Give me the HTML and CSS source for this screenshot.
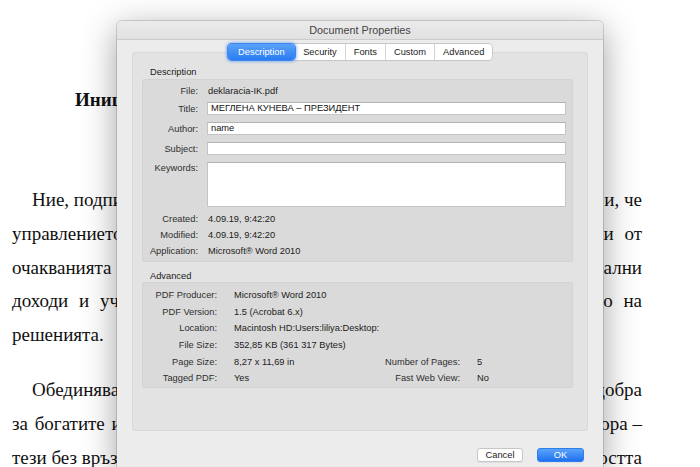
FILE: index.html
```html
<!DOCTYPE html>
<html lang="bg">
<head>
<meta charset="utf-8">
<title>Document Properties</title>
<link rel="stylesheet" href="styles.css">
</head>
<body>
<div class="doc">
  <div class="doc-title">Инициативен</div>
  <div class="para">
    <div class="ln first"><span>Ние, подписаните</span><span>и, че</span></div>
    <div class="ln"><span>управлението</span><span class="wide">и от</span></div>
    <div class="ln"><span>очакванията</span><span>реални</span></div>
    <div class="ln"><span class="wide">доходи и уч</span><span class="wide">само на</span></div>
    <div class="ln"><span>решенията.</span></div>
  </div>
  <div class="para">
    <div class="ln first"><span>Обединяваме</span><span>добра</span></div>
    <div class="ln"><span class="mid">за богатите и</span><span>хора –</span></div>
    <div class="ln"><span>тези без връзки</span><span>бедността</span></div>
  </div>
</div>

<div class="dialog">
  <div class="titlebar">Document Properties</div>
  <div class="dlg-body">
    <div class="tabs-wrap">
      <div class="tabs">
        <span class="tab sel">Description</span>
        <span class="tab">Security</span>
        <span class="tab">Fonts</span>
        <span class="tab">Custom</span>
        <span class="tab">Advanced</span>
      </div>
    </div>
    <div class="panel">
      <div class="sec-title">Description</div>
      <div class="box desc">
        <div class="row r-file"><span class="lbl">File:</span><span class="val">deklaracia-IK.pdf</span></div>
        <div class="row r-field r-first"><span class="lbl">Title:</span><span class="field">МЕГЛЕНА КУНЕВА – ПРЕЗИДЕНТ</span></div>
        <div class="row r-field"><span class="lbl">Author:</span><span class="field">name</span></div>
        <div class="row r-field"><span class="lbl">Subject:</span><span class="field"></span></div>
        <div class="row r-kw"><span class="lbl">Keywords:</span><span class="field area"></span></div>
        <div class="row r-info r-info-first"><span class="lbl">Created:</span><span class="val">4.09.19, 9:42:20</span></div>
        <div class="row r-info"><span class="lbl">Modified:</span><span class="val">4.09.19, 9:42:20</span></div>
        <div class="row r-info"><span class="lbl">Application:</span><span class="val">Microsoft® Word 2010</span></div>
      </div>
      <div class="sec-title sec-adv">Advanced</div>
      <div class="box adv">
        <span class="lbl">PDF Producer:</span><span class="val">Microsoft® Word 2010</span><span></span><span></span>
        <span class="lbl">PDF Version:</span><span class="val">1.5 (Acrobat 6.x)</span><span></span><span></span>
        <span class="lbl">Location:</span><span class="val">Macintosh HD:Users:liliya:Desktop:</span><span></span><span></span>
        <span class="lbl">File Size:</span><span class="val">352,85 KB (361 317 Bytes)</span><span></span><span></span>
        <span class="lbl">Page Size:</span><span class="val">8,27 x 11,69 in</span><span class="lbl">Number of Pages:</span><span class="val">5</span>
        <span class="lbl">Tagged PDF:</span><span class="val">Yes</span><span class="lbl">Fast Web View:</span><span class="val">No</span>
      </div>
    </div>
    <div class="buttons">
      <button class="btn">Cancel</button>
      <button class="btn ok">OK</button>
    </div>
  </div>
</div>
</body>
</html>
```

FILE: styles.css
```css
html, body {
  margin: 0;
  padding: 0;
}
body {
  width: 700px;
  height: 467px;
  overflow: hidden;
  position: relative;
  background: #ffffff;
}

/* background document */
.doc {
  font-family: "Liberation Serif", "Times New Roman", serif;
  font-size: 19px;
  line-height: 33.7px;
  color: #111;
  width: 630px;
  margin-left: 12px;
  padding-top: 83px;
}
.doc-title {
  font-weight: bold;
  padding-left: 63px;
  margin-bottom: 66.6px;
}
.para {
  margin-bottom: 21.3px;
}
.para:last-child {
  margin-bottom: 0;
}
.ln {
  display: flex;
  justify-content: space-between;
  white-space: nowrap;
}
.ln.first {
  padding-left: 20px;
}
.wide {
  word-spacing: 6px;
}
.mid {
  word-spacing: 2px;
}

/* dialog window */
.dialog {
  position: absolute;
  left: 117px;
  top: 21px;
  width: 486px;
  height: 446px;
  background: #ececec;
  border-radius: 5px 5px 0 0;
  box-shadow: 0 0 0 1px rgba(0, 0, 0, 0.14), 0 8px 34px rgba(0, 0, 0, 0.38);
  font-family: "Liberation Sans", Arial, sans-serif;
  font-size: 9.3px;
  color: #1a1a1a;
}
.titlebar {
  height: 18px;
  line-height: 19px;
  text-align: center;
  font-size: 10.8px;
  color: #444;
  background: linear-gradient(#ebebeb, #e1e1e1);
  border-bottom: 1px solid #cbcbcb;
  border-radius: 5px 5px 0 0;
}
.dlg-body {
  padding: 4px 15px 0 15px;
}
.tabs-wrap {
  display: flex;
  justify-content: center;
  position: relative;
  z-index: 2;
}
.tabs {
  display: flex;
  height: 16px;
  background: #fff;
  border-radius: 4px;
  box-shadow: 0 0 0 1px #c8c8c8, 0 1px 1px rgba(0, 0, 0, 0.08);
}
.tab {
  display: block;
  padding: 0 8px;
  line-height: 16px;
  color: #1a1a1a;
  border-left: 1px solid #d4d4d4;
}
.tab:first-child {
  border-left: none;
}
.tab.sel {
  padding: 0 10.5px;
  color: #fff;
  border-radius: 4px;
  background: linear-gradient(#5aa2f8, #2a7cf3);
  box-shadow: 0 0 0 1px #3b86ef, 0 0 3px 2px rgba(80, 145, 240, 0.55);
}
.tab.sel + .tab {
  border-left: none;
}

.panel {
  margin-top: -8px;
  height: 379px;
  box-sizing: border-box;
  padding: 14px 15px 0 10px;
  background: #e3e3e3;
  border-radius: 4px;
  box-shadow: inset 0 0 0 1px #d9d9d9;
}
.sec-title {
  line-height: 12px;
  height: 12px;
  padding-left: 8px;
  margin-bottom: 1px;
  color: #1a1a1a;
}
.sec-adv {
  margin-top: 8px;
  margin-bottom: 0;
}
.box {
  background: #dadada;
  border-radius: 3px;
  box-shadow: inset 0 0 0 1px #d3d3d3;
}
.desc {
  padding: 4px 7px 3px 0;
}
.row {
  display: flex;
  align-items: center;
}
.lbl {
  color: #2e2e2e;
  text-align: right;
}
.row .lbl {
  width: 56px;
  flex: none;
  margin-right: 9px;
}
.val {
  color: #1a1a1a;
  padding-left: 1px;
  white-space: nowrap;
}
.r-file {
  height: 16px;
}
.r-field {
  height: 13px;
  margin-top: 7px;
}
.r-field.r-first {
  margin-top: 3px;
}
.r-kw {
  height: 45px;
  margin-top: 7px;
  align-items: flex-start;
}
.r-kw .lbl {
  padding-top: 1px;
}
.r-info {
  height: 16px;
}
.r-info-first {
  margin-top: 4px;
}
.field {
  flex: 1;
  height: 13px;
  box-sizing: border-box;
  background: #fff;
  border: 1px solid #c4c4c4;
  border-top-color: #b4b4b4;
  padding-left: 3px;
  line-height: 11px;
  color: #111;
}
.field.area {
  height: 45px;
}

.adv {
  display: grid;
  grid-template-columns: 75px 131px 80px 1fr;
  grid-auto-rows: 16.6px;
  column-gap: 16px;
  align-items: center;
  padding: 5px 0 1.5px;
}

.buttons {
  display: flex;
  justify-content: flex-end;
  gap: 14px;
  margin-top: 17px;
  padding-right: 4px;
}
.btn {
  height: 14px;
  padding: 0;
  margin: 0;
  font-family: "Liberation Sans", Arial, sans-serif;
  font-size: 9.3px;
  line-height: 12px;
  color: #1a1a1a;
  background: #fff;
  border: 1px solid #c6c6c6;
  border-radius: 3px;
  width: 46px;
  box-shadow: 0 1px 0 rgba(0, 0, 0, 0.05);
}
.btn.ok {
  width: 47px;
  color: #fff;
  border-color: #2d7ff0;
  background: linear-gradient(#5ba3f8, #1f72f1);
}
```
